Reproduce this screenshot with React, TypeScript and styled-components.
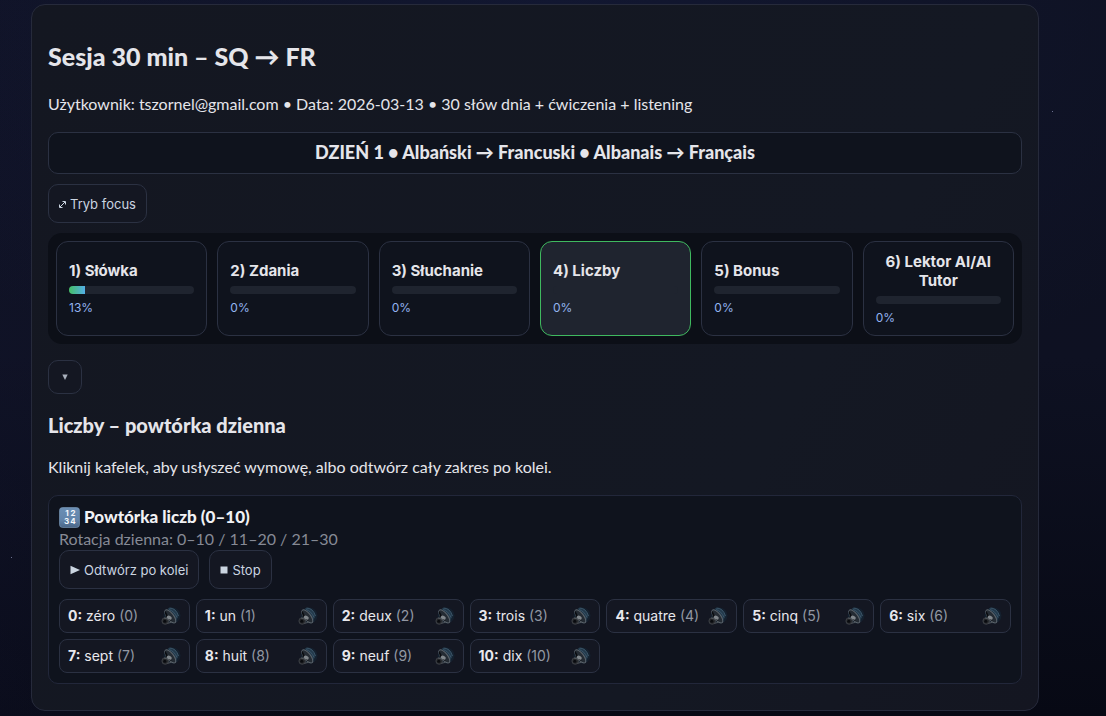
import React from "react";
import styled, { createGlobalStyle } from "styled-components";

const GlobalStyle = createGlobalStyle`
  * { box-sizing: border-box; }
  body {
    margin: 0;
    min-height: 100vh;
    background:
      radial-gradient(ellipse 70% 60% at 50% 0%, rgba(22, 30, 70, 0.45), transparent),
      linear-gradient(90deg, rgba(20, 22, 48, 0.3), transparent 30%),
      linear-gradient(180deg, #0e1120 0%, #0e1122 50%, #070914 100%);
    color: #e5e5ea;
    font-family: Lato, "Noto Sans", sans-serif;
    font-size: 16px;
    line-height: 22px;
  }
  h1, h2, p { margin: 0; }
  button { font-family: Inter, "Noto Sans", sans-serif; cursor: pointer; }
`;

const Page = styled.main`
  position: relative;
  padding: 4px 67px 5px 31px;
`;

const Star = styled.i<{ $x: string; $y: string }>`
  position: absolute;
  left: ${(p) => p.$x};
  top: ${(p) => p.$y};
  width: 1px;
  height: 1px;
  background: #6b7090;
`;

const Card = styled.section`
  display: flex;
  flex-direction: column;
  align-items: flex-start;
  padding: 35px 16px 26px;
  border: 1px solid #262a3b;
  border-radius: 14px;
  background: linear-gradient(120deg, #141721, #141823 70%, #141621);
`;

const Title = styled.h1`
  font-size: 25px;
  line-height: 32px;
  font-weight: 900;
`;

const Lead = styled.p<{ $gap: number }>`
  margin-top: ${(p) => p.$gap}px;
  font-size: 16px;
  line-height: 24px;
`;

const DayBanner = styled.div`
  align-self: stretch;
  margin-top: 16px;
  padding: 7px 12px 9px;
  border: 1px solid #2b3142;
  border-radius: 10px;
  background: #0f131d;
  text-align: center;
  font-size: 18px;
  line-height: 24px;
  font-weight: 900;
`;

const ToolButton = styled.button`
  display: inline-flex;
  align-items: center;
  gap: 4px;
  height: 39px;
  padding: 0 10px;
  border: 1px solid #2b3142;
  border-radius: 10px;
  background: #141722;
  color: #cbd5e1;
  font-size: 13px;
  line-height: 20px;
  svg { display: block; }
`;

const FocusButton = styled(ToolButton)`
  margin-top: 10px;
`;

const CollapseButton = styled(ToolButton)`
  justify-content: center;
  width: 34px;
  height: 34px;
  margin-top: 16px;
  padding: 0;
`;

const Tabs = styled.nav`
  align-self: stretch;
  display: grid;
  grid-template-columns: repeat(6, 1fr);
  gap: 10px;
  margin-top: 10px;
  padding: 8px;
  border-radius: 14px;
  background: #0c0f17;
`;

const Tab = styled.button<{ $active: boolean }>`
  display: flex;
  flex-direction: column;
  justify-content: center;
  align-items: flex-start;
  min-height: 95px;
  padding: 9px 12px;
  border: 1px solid ${(p) => (p.$active ? "#3fb95f" : "#2b3142")};
  border-radius: 12px;
  background: ${(p) => (p.$active ? "#1f242f" : "#0f131d")};
  color: #e5e5ea;
`;

const TabLabel = styled.span`
  font-size: 15px;
  line-height: 19px;
  font-weight: 700;
`;

const Track = styled.span`
  align-self: stretch;
  height: 8px;
  margin-top: 6px;
  overflow: hidden;
  border-radius: 4px;
  background: #1f242f;
`;

const Fill = styled.span`
  display: block;
  height: 100%;
  background: linear-gradient(90deg, #45bf66, #53aee6);
`;

const Percent = styled.span`
  margin-top: 6px;
  color: #93b4f0;
  font-size: 12px;
  line-height: 16px;
`;

const SectionTitle = styled.h2`
  margin-top: 19px;
  font-size: 20px;
  line-height: 24px;
  font-weight: 900;
`;

const Panel = styled.section`
  align-self: stretch;
  margin-top: 16px;
  padding: 10px;
  border: 1px solid #22273a;
  border-radius: 10px;
  background: #0f131d;
`;

const PanelTitle = styled.strong`
  display: flex;
  align-items: center;
  gap: 4px;
  font-size: 17px;
  line-height: 22px;
  font-weight: 900;
  color: #f1f1f4;
`;

const Note = styled.p`
  color: #868a95;
  font-size: 16px;
  line-height: 22px;
`;

const Actions = styled.div`
  display: flex;
  gap: 10px;
`;

const NumberGrid = styled.div`
  display: grid;
  grid-template-columns: repeat(7, 1fr);
  gap: 6px;
  margin-top: 10px;
`;

const NumberTile = styled.button`
  display: flex;
  align-items: center;
  justify-content: space-between;
  height: 34px;
  padding: 0 8px;
  border: 1px solid #2b3142;
  border-radius: 8px;
  background: #141722;
  color: #e8e8ed;
  font-size: 14px;
  line-height: 20px;
  white-space: nowrap;
`;

const Muted = styled.span`
  color: #9297a3;
`;

const NumbersIcon = () => (
  <svg width="21" height="21" viewBox="0 0 21 21" aria-hidden="true">
    <defs>
      <linearGradient id="keycap" x1="0" y1="0" x2="0" y2="1">
        <stop offset="0" stopColor="#6b8fb5" />
        <stop offset="0.6" stopColor="#6385ab" />
        <stop offset="1" stopColor="#4a6688" />
      </linearGradient>
    </defs>
    <rect x="0.5" y="0.5" width="20" height="20" rx="3" fill="url(#keycap)" stroke="#7e9dbd" strokeWidth="0.6" />
    <g fill="#f4f7fb" fontFamily="Inter, sans-serif" fontSize="8" fontWeight="700" textAnchor="middle">
      <text x="8" y="9">1</text>
      <text x="14" y="9">2</text>
      <text x="7.5" y="17">3</text>
      <text x="14" y="17">4</text>
    </g>
  </svg>
);

const SpeakerIcon = () => (
  <svg width="22" height="22" viewBox="0 0 22 22" fill="none" aria-hidden="true">
    <ellipse cx="13" cy="10.500" rx="8.500" ry="8" fill="#18344b" opacity="0.3" />
    <path d="M9.500 3 Q17 2 19.500 11 L16.500 17 Q16 9 9 4Z" fill="#22384a" />
    <path d="M10.500 3 Q17 3 19.500 11 M9.800 4.500 Q15.500 6 18 12.500" stroke="#3b5568" strokeWidth="1" />
    <circle cx="6.200" cy="16" r="3.300" fill="#25272b" stroke="#43464b" strokeWidth="0.800" />
    <circle cx="5.800" cy="16.200" r="1.500" fill="#090b0f" />
    <ellipse cx="11.300" cy="11.400" rx="3.300" ry="7.900" transform="rotate(-38 11.300 11.400)" fill="#242b33" stroke="#5c646c" strokeWidth="1" />
    <path d="M6.200 5.500 Q5 8 7 11.500 Q9.500 15 13.500 16.800 Q9 12.500 8.500 10Z" fill="#0a0c10" />
    <ellipse cx="10.300" cy="12.600" rx="2.600" ry="1.800" transform="rotate(25 10.300 12.600)" fill="#80868b" />
    <path d="M5 13 L9 14.200 M8.500 18.300 L12.500 17.300" stroke="#565b61" strokeWidth="0.900" />
  </svg>
);

const ExpandIcon = () => (
  <svg width="7" height="8" viewBox="0 0 7 8" fill="none" stroke="currentColor" aria-hidden="true">
    <path d="M1 7 6 2M3.500 1.500h3v3M0.500 4.500v3h3" />
  </svg>
);

const PlayIcon = () => (
  <svg width="10" height="10" viewBox="0 0 10 10" fill="currentColor" aria-hidden="true">
    <path d="M0.500 0.800 10 5 0.500 9.200Z" />
  </svg>
);

const StopIcon = () => (
  <svg width="8" height="8" viewBox="0 0 8 8" fill="currentColor" aria-hidden="true">
    <path d="M0.500 0.500h7v7h-7z" />
  </svg>
);

const CaretIcon = () => (
  <svg width="6" height="6" viewBox="0 0 6 6" fill="#a9b0bc" aria-hidden="true">
    <path d="M0.300 0.500h5.400L3 6Z" />
  </svg>
);

const tabs = [
  { label: "1) Słówka", value: 13 },
  { label: "2) Zdania", value: 0 },
  { label: "3) Słuchanie", value: 0 },
  { label: "4) Liczby", value: 0 },
  { label: "5) Bonus", value: 0 },
  { label: "6) Lektor AI/AI Tutor", value: 0 },
];

const numbers = ["zéro", "un", "deux", "trois", "quatre", "cinq", "six", "sept", "huit", "neuf", "dix"];

export default function App() {
  const [active, setActive] = React.useState(3);

  return (
    <>
      <GlobalStyle />
      <Page>
        <Star $x="1052px" $y="111px" />
        <Star $x="11px" $y="557px" />
        <Card>
          <Title>Sesja 30 min – SQ → FR</Title>
          <Lead $gap={20}>
            Użytkownik: tszornel@gmail.com • Data: 2026-03-13 • 30 słów dnia + ćwiczenia + listening
          </Lead>
          <DayBanner>DZIEŃ 1 • Albański → Francuski • Albanais → Français</DayBanner>
          <FocusButton type="button">
            <ExpandIcon />
            Tryb focus
          </FocusButton>
          <Tabs>
            {tabs.map((tab, i) => (
              <Tab key={tab.label} type="button" $active={i === active} onClick={() => setActive(i)}>
                <TabLabel>{tab.label}</TabLabel>
                <Track>
                  <Fill style={{ width: `${tab.value}%` }} />
                </Track>
                <Percent>{tab.value}%</Percent>
              </Tab>
            ))}
          </Tabs>
          <CollapseButton type="button" aria-label="Zwiń">
            <CaretIcon />
          </CollapseButton>
          <SectionTitle>Liczby – powtórka dzienna</SectionTitle>
          <Lead $gap={18}>Kliknij kafelek, aby usłyszeć wymowę, albo odtwórz cały zakres po kolei.</Lead>
          <Panel>
            <PanelTitle>
              <NumbersIcon />
              Powtórka liczb (0–10)
            </PanelTitle>
            <Note>Rotacja dzienna: 0–10 / 11–20 / 21–30</Note>
            <Actions>
              <ToolButton type="button">
                <PlayIcon />
                Odtwórz po kolei
              </ToolButton>
              <ToolButton type="button">
                <StopIcon />
                Stop
              </ToolButton>
            </Actions>
            <NumberGrid>
              {numbers.map((word, n) => (
                <NumberTile key={word} type="button">
                  <span>
                    <b>{n}:</b> {word} <Muted>({n})</Muted>
                  </span>
                  <SpeakerIcon />
                </NumberTile>
              ))}
            </NumberGrid>
          </Panel>
        </Card>
      </Page>
    </>
  );
}
